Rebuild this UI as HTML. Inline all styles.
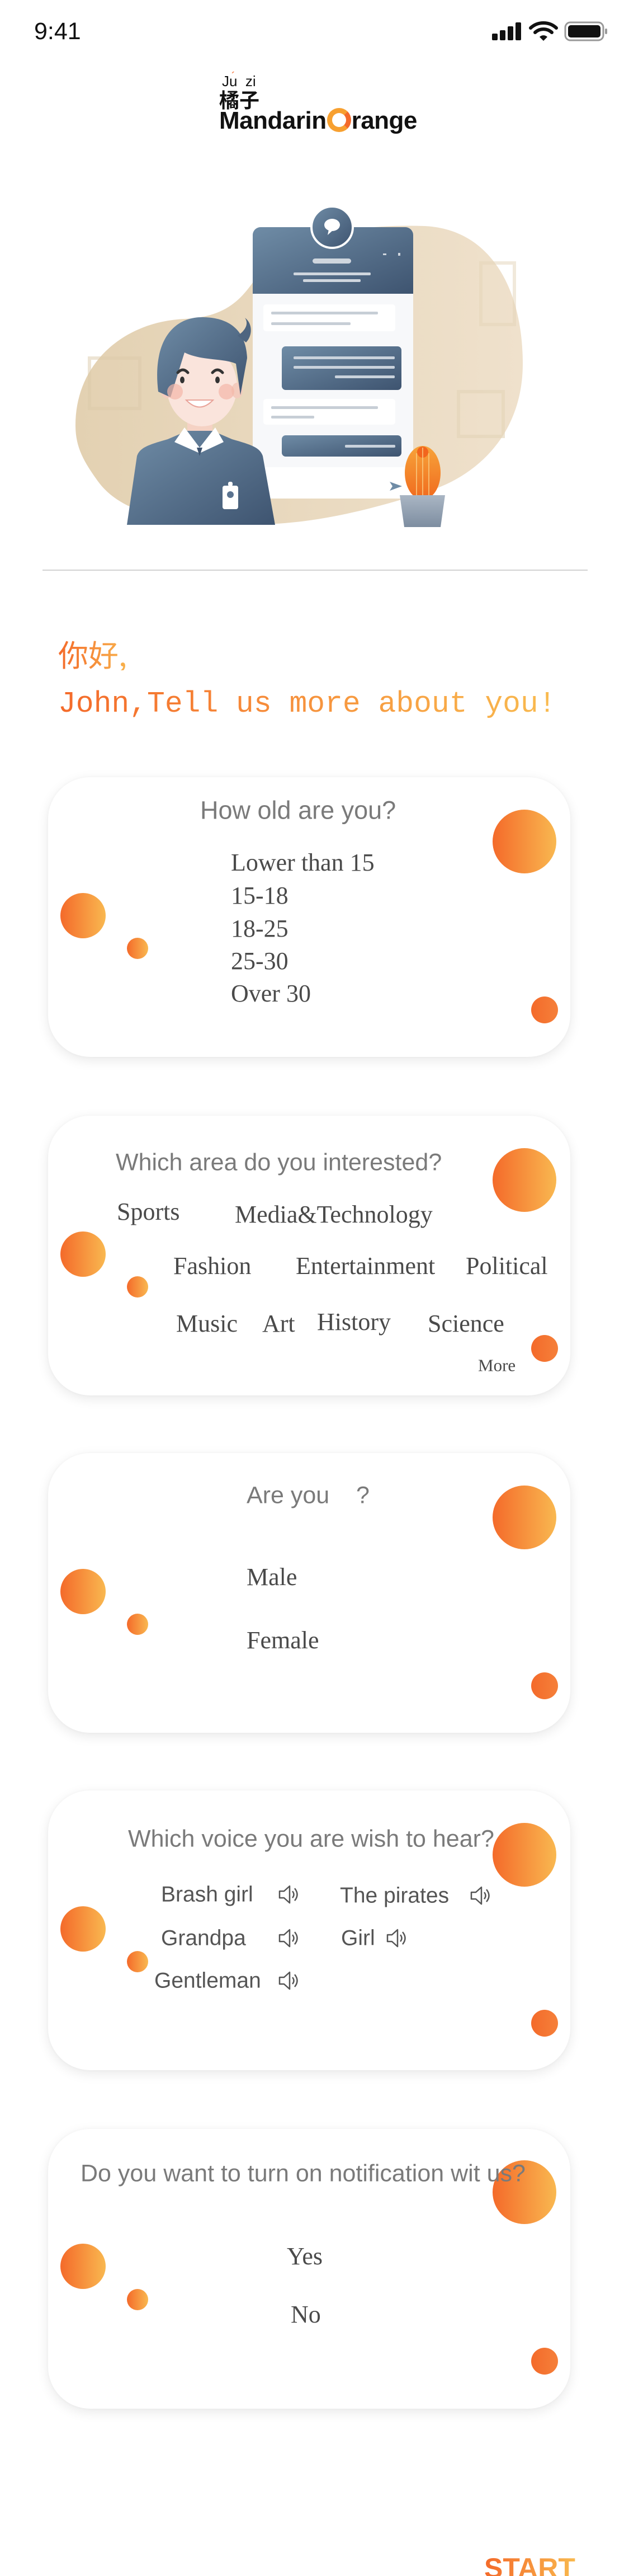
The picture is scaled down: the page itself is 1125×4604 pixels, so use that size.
<!DOCTYPE html>
<html><head><meta charset="utf-8">
<style>
*{margin:0;padding:0;box-sizing:border-box}
html,body{width:1125px;height:4604px;background:#fff;overflow:hidden}
body{position:relative;font-family:"Liberation Sans",Arial,sans-serif}
.a{position:absolute;white-space:nowrap}
.card{position:absolute;left:86px;width:934px;height:500px;background:#fff;border-radius:75px;box-shadow:0 6px 22px rgba(0,0,0,0.09),0 0 6px rgba(0,0,0,0.03)}
.dot{position:absolute;border-radius:50%;background:linear-gradient(90deg,#f46a2a,#f9b850)}
.d1{left:795px;width:114px;height:114px}
.d2{left:22px;width:81px;height:81px}
.d3{left:141px;width:38px;height:38px}
.d4{left:864px;width:48px;height:48px;background:linear-gradient(90deg,#f46a2a,#f5803a)}
.t{position:absolute;white-space:nowrap;color:#7a7a7a;font-size:43px;line-height:1;transform:translateY(-50%)}
.o{position:absolute;white-space:nowrap;color:#4a4a4a;font-family:"Liberation Serif","Times New Roman",serif;font-size:44px;line-height:1;transform:translateY(-50%)}
.v{position:absolute;white-space:nowrap;color:#555;font-size:39px;line-height:1;transform:translateY(-50%)}
.spk{position:absolute;width:40px;height:40px;transform:translateY(-50%)}
.grad{background:linear-gradient(90deg,#f46a2a,#f9bc50);-webkit-background-clip:text;background-clip:text;color:transparent}
</style></head><body>

<!-- status bar -->
<div class="a" style="left:61px;top:32px;font-size:43px;color:#111;line-height:48px">9:41</div>
<svg class="a" style="left:878px;top:38px" width="210" height="40" viewBox="0 0 210 40">
<rect x="2" y="22" width="10" height="12" rx="2" fill="#111"/>
<rect x="16" y="16" width="10" height="18" rx="2" fill="#111"/>
<rect x="30" y="9" width="10" height="25" rx="2" fill="#111"/>
<rect x="44" y="2" width="10" height="32" rx="2" fill="#111"/>
<path d="M71 12 A34 34 0 0 1 117 12" stroke="#111" stroke-width="6" fill="none" stroke-linecap="round"/>
<path d="M79 20 A22 22 0 0 1 109 20" stroke="#111" stroke-width="6" fill="none" stroke-linecap="round"/>
<path d="M87 28 L94 35 L101 28 A10 10 0 0 0 87 28Z" fill="#111"/>
<rect x="133" y="2" width="68" height="32" rx="9" fill="none" stroke="#999" stroke-width="3"/>
<rect x="138" y="7" width="58" height="22" rx="5" fill="#111"/>
<rect x="204" y="13" width="4" height="10" rx="2" fill="#999"/>
</svg>

<!-- logo -->
<div class="a" style="left:397px;top:130px;font-size:26px;line-height:30px;color:#111">J<span style="position:relative">u<span style="position:absolute;left:4px;top:-8px;color:#f46a2a;font-size:20px">´</span></span>&nbsp;&nbsp;zi</div>
<div class="a" style="left:392px;top:157px;font-family:'Noto Sans CJK SC',sans-serif;font-size:36px;line-height:40px;color:#111;font-weight:700">橘子</div>
<div class="a" style="left:392px;top:190px;font-size:44px;font-weight:700;line-height:52px;color:#111;letter-spacing:-0.5px">Mandarin<span style="display:inline-block;width:43px;height:43px;border-radius:50%;border:9px solid #f7a030;border-right-color:#f46a2a;vertical-align:-6px;margin:0 1px"></span>range</div>

<!-- illustration -->
<svg class="a" style="left:0;top:360px" width="1125" height="600" viewBox="0 360 1125 600">
<defs>
<linearGradient id="bl" x1="0" y1="0" x2="1" y2="0"><stop offset="0" stop-color="#e3d1b2"/><stop offset="1" stop-color="#efe1cc"/></linearGradient>
<linearGradient id="nv" x1="0" y1="0" x2="1" y2="1"><stop offset="0" stop-color="#6f8ca6"/><stop offset="1" stop-color="#3e5470"/></linearGradient>
<linearGradient id="ca" x1="0" y1="0" x2="0" y2="1"><stop offset="0" stop-color="#f7a33a"/><stop offset="1" stop-color="#f06a1e"/></linearGradient>
<linearGradient id="pt" x1="0" y1="0" x2="0" y2="1"><stop offset="0" stop-color="#aab6c4"/><stop offset="1" stop-color="#7d8da0"/></linearGradient>
</defs>
<path d="M135 760 C135 650 220 575 330 570 C420 566 440 520 470 480 C520 420 640 400 760 404 C880 410 935 520 935 650 C935 770 860 850 760 880 C650 915 560 935 470 937 C300 940 215 915 175 860 C150 825 135 800 135 760Z" fill="url(#bl)"/>
<rect x="160" y="640" width="90" height="90" fill="none" stroke="#dccaaa" stroke-width="6" opacity=".5"/>
<rect x="820" y="700" width="80" height="80" fill="none" stroke="#e3d3b8" stroke-width="6" opacity=".6"/>
<rect x="860" y="470" width="60" height="110" fill="none" stroke="#e3d3b8" stroke-width="6" opacity=".5"/>
<!-- panel -->
<rect x="452" y="406" width="287" height="485" rx="14" fill="#f7f8fa"/>
<path d="M466 406 H725 A14 14 0 0 1 739 420 V525 H452 V420 A14 14 0 0 1 466 406Z" fill="url(#nv)"/>
<circle cx="594" cy="406" r="37" fill="url(#nv)" stroke="#fff" stroke-width="4"/>
<ellipse cx="594" cy="402" rx="14" ry="11" fill="#fff"/><path d="M588 410 L586 420 L596 411Z" fill="#fff"/>
<rect x="559" y="462" width="69" height="9" rx="4.5" fill="#cfd6de"/>
<rect x="525" y="487" width="138" height="5" rx="2" fill="#cfd6de"/>
<rect x="542" y="499" width="103" height="5" rx="2" fill="#cfd6de"/>
<rect x="685" y="453" width="6" height="3" fill="#cfd6de"/><rect x="712" y="452" width="4" height="5" fill="#cfd6de"/>
<rect x="471" y="544" width="236" height="48" rx="5" fill="#fff"/>
<rect x="485" y="557" width="191" height="5" rx="2" fill="#c7ced6"/>
<rect x="485" y="576" width="142" height="5" rx="2" fill="#c7ced6"/>
<rect x="504" y="619" width="214" height="78" rx="7" fill="url(#nv)"/>
<rect x="525" y="637" width="181" height="5" rx="2" fill="#c9d2dc"/>
<rect x="525" y="654" width="181" height="5" rx="2" fill="#c9d2dc"/>
<rect x="599" y="671" width="107" height="5" rx="2" fill="#c9d2dc"/>
<rect x="471" y="713" width="236" height="46" rx="5" fill="#fff"/>
<rect x="485" y="726" width="191" height="5" rx="2" fill="#c7ced6"/>
<rect x="485" y="743" width="77" height="5" rx="2" fill="#c7ced6"/>
<rect x="504" y="778" width="214" height="38" rx="7" fill="url(#nv)"/>
<rect x="617" y="795" width="90" height="5" rx="2" fill="#c9d2dc"/>
<rect x="452" y="835" width="287" height="56" fill="#fff"/>
<path d="M697 861 L719 869 L697 877 L702 869Z" fill="#6f8ca6"/>
<!-- person -->
<path d="M227 938 L245 815 C250 800 265 795 300 785 L335 770 L380 770 L415 785 C450 795 465 800 470 815 L492 938 Z" fill="url(#nv)"/>
<path d="M330 764 L357 800 L385 764 L400 790 L357 810 L312 790Z" fill="#fff"/>
<path d="M352 800 L357 815 L362 800Z" fill="#3e5470"/>
<rect x="398" y="868" width="28" height="42" rx="4" fill="#fff"/><circle cx="412" cy="884" r="6" fill="#5a7390"/><rect x="408" y="861" width="8" height="8" rx="3" fill="#fff"/>
<rect x="335" y="730" width="45" height="40" fill="#f5d2c4"/>
<ellipse cx="361" cy="690" rx="63" ry="72" fill="#fae4dc"/>
<ellipse cx="298" cy="698" rx="10" ry="14" fill="#f3cbbd"/>
<ellipse cx="424" cy="698" rx="10" ry="14" fill="#f3cbbd"/>
<path d="M283 700 C272 610 310 565 365 567 C410 568 440 590 442 640 L430 706 L422 650 C400 640 360 645 330 630 L305 710 Z" fill="url(#nv)"/>
<path d="M425 600 C440 590 445 578 438 568 C452 578 452 600 440 612Z" fill="#4e6580"/>
<path d="M318 666 Q327 656 336 666" stroke="#333" stroke-width="5" fill="none" stroke-linecap="round"/>
<path d="M380 666 Q389 656 398 666" stroke="#333" stroke-width="5" fill="none" stroke-linecap="round"/>
<ellipse cx="326" cy="679" rx="4" ry="6" fill="#333"/><ellipse cx="389" cy="679" rx="4" ry="6" fill="#333"/>
<circle cx="313" cy="700" r="14" fill="#f3b6a8" opacity=".7"/><circle cx="405" cy="700" r="14" fill="#f3b6a8" opacity=".7"/>
<path d="M333 715 Q357 740 381 715 Z" fill="#fff" stroke="#e9a49a" stroke-width="2"/>
<!-- cactus -->
<ellipse cx="756" cy="845" rx="32" ry="48" fill="url(#ca)"/>
<circle cx="756" cy="808" r="10" fill="#f2651d"/>
<path d="M745 810 V885 M767 810 V885 M756 800 V885" stroke="#fbd28a" stroke-width="2" opacity=".7"/>
<path d="M715 885 H796 L788 942 H723Z" fill="url(#pt)"/>
</svg>

<div class="a" style="left:76px;top:1018px;width:975px;height:2px;background:#d2d2d2"></div>

<div class="a grad" style="left:104px;top:1138px;font-family:'Noto Sans CJK SC','WenQuanYi Zen Hei',sans-serif;font-size:54px;line-height:60px;width:140px">你好,</div>
<div class="a grad" style="left:104px;top:1226px;font-family:'Liberation Mono',monospace;font-size:53px;line-height:64px;width:900px">John,Tell us more about you!</div>

<!-- card 1 -->
<div class="card" style="top:1389px">
<div class="t" style="left:272px;top:59px;font-size:45px">How old are you?</div>
<div class="o" style="left:327px;top:153px">Lower than 15</div>
<div class="o" style="left:327px;top:212px">15-18</div>
<div class="o" style="left:327px;top:271px">18-25</div>
<div class="o" style="left:327px;top:329px">25-30</div>
<div class="o" style="left:327px;top:387px">Over 30</div>
<div class="dot d1" style="top:58px"></div><div class="dot d2" style="top:207px"></div><div class="dot d3" style="top:287px"></div><div class="dot d4" style="top:392px"></div>
</div>

<!-- card 2 -->
<div class="card" style="top:1994px">
<div class="t" style="left:121px;top:84px">Which area do you interested?</div>
<div class="o" style="left:123px;top:172px">Sports</div>
<div class="o" style="left:334px;top:177px">Media&amp;Technology</div>
<div class="o" style="left:224px;top:269px">Fashion</div>
<div class="o" style="left:443px;top:269px">Entertainment</div>
<div class="o" style="left:747px;top:269px">Political</div>
<div class="o" style="left:229px;top:372px">Music</div>
<div class="o" style="left:383px;top:372px">Art</div>
<div class="o" style="left:481px;top:369px">History</div>
<div class="o" style="left:679px;top:372px">Science</div>
<div class="o" style="left:769px;top:446px;font-size:31px">More</div>
<div class="dot d1" style="top:58px"></div><div class="dot d2" style="top:207px"></div><div class="dot d3" style="top:287px"></div><div class="dot d4" style="top:392px"></div>
</div>

<!-- card 3 -->
<div class="card" style="top:2597px">
<div class="t" style="left:355px;top:76px">Are you &nbsp;&nbsp;&nbsp;?</div>
<div class="o" style="left:355px;top:222px">Male</div>
<div class="o" style="left:355px;top:335px">Female</div>
<div class="dot d1" style="top:58px"></div><div class="dot d2" style="top:207px"></div><div class="dot d3" style="top:287px"></div><div class="dot d4" style="top:392px"></div>
</div>

<svg width="0" height="0" style="position:absolute"><defs>
<symbol id="sp" viewBox="0 0 40 40"><path d="M3 14 H11 L21 5 V35 L11 26 H3Z" fill="none" stroke="#555" stroke-width="2.5" stroke-linejoin="round"/><path d="M26 14 Q31 20 26 26" fill="none" stroke="#555" stroke-width="2.5"/><path d="M30 9 Q39 20 30 31" fill="none" stroke="#555" stroke-width="2.5"/></symbol>
</defs></svg>

<!-- card 4 -->
<div class="card" style="top:3200px">
<div class="dot d1" style="top:58px"></div>
<div class="t" style="left:143px;top:87px;z-index:1">Which voice you are wish to hear?</div>
<div class="v" style="left:202px;top:186px">Brash girl</div>
<svg class="spk" style="left:411px;top:186px"><use href="#sp"/></svg>
<div class="v" style="left:522px;top:188px">The pirates</div>
<svg class="spk" style="left:754px;top:188px"><use href="#sp"/></svg>
<div class="v" style="left:202px;top:264px">Grandpa</div>
<svg class="spk" style="left:411px;top:264px"><use href="#sp"/></svg>
<div class="v" style="left:524px;top:264px">Girl</div>
<svg class="spk" style="left:604px;top:264px"><use href="#sp"/></svg>
<div class="v" style="left:190px;top:340px">Gentleman</div>
<svg class="spk" style="left:411px;top:340px"><use href="#sp"/></svg>
<div class="dot d2" style="top:207px"></div><div class="dot d3" style="top:287px"></div><div class="dot d4" style="top:392px"></div>
</div>

<!-- card 5 -->
<div class="card" style="top:3805px">
<div class="dot d1" style="top:56px"></div>
<div class="t" style="left:58px;top:80px;z-index:1">Do you want to turn on notification wit us?</div>
<div class="o" style="left:427px;top:228px">Yes</div>
<div class="o" style="left:434px;top:332px">No</div>
<div class="dot d2" style="top:205px"></div><div class="dot d3" style="top:286px"></div><div class="dot d4" style="top:391px"></div>
</div>

<div class="a grad" style="left:866px;top:4562px;font-size:50px;font-weight:700;line-height:56px;width:170px">START</div>
</body></html>
